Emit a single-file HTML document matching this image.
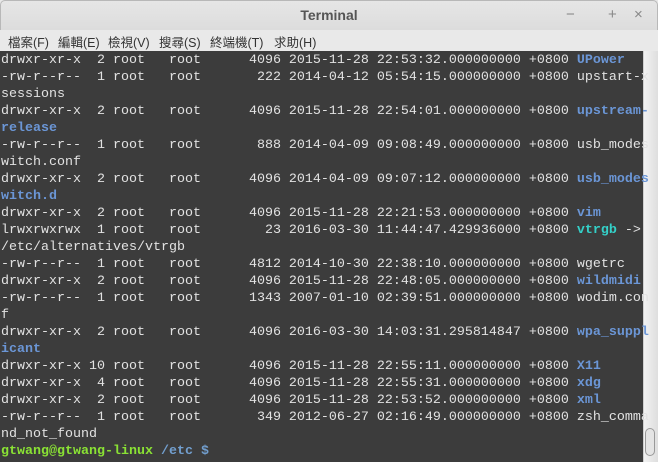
<!DOCTYPE html>
<html><head><meta charset="utf-8"><style>
*{margin:0;padding:0;box-sizing:border-box}
body{width:658px;height:462px;overflow:hidden;background:#e8e8e8;font-family:"Liberation Sans","Noto Sans CJK TC",sans-serif;position:relative}
#title{position:absolute;left:0;top:0;width:658px;height:30px;background:linear-gradient(#e6e6e6,#dcdcdc);border:1px solid #b8b8b8;border-bottom:none;border-radius:5px 5px 0 0}
#title .t{position:absolute;left:0;right:0;top:6px;text-align:center;font-size:14px;font-weight:bold;color:#555}
#title .b{position:absolute;top:5px;font-size:15px;color:#888}
#menu{position:absolute;left:0;top:30px;width:658px;height:21px;background:#e9e9e9;font-size:12.5px;color:#333}
#menu span{position:absolute;top:2px}
#term{position:absolute;left:0;top:51px;width:643px;height:411px;background:#3c3c3c}
#sb{position:absolute;left:643px;top:51px;width:15px;height:411px;background:linear-gradient(90deg,#f2f2f2,#dedede);border-left:1px solid #cfcfcf}
#thumb{position:absolute;left:645px;top:428px;width:10px;height:28px;border:1px solid #999;border-radius:5px;background:#e4e4e4}
pre{position:absolute;left:1px;top:52px;font-family:"Liberation Mono",monospace;font-size:13.33px;line-height:17px;color:#e2e2e2;white-space:pre}
.d{color:#6b96d6;font-weight:bold}
.c{color:#34d0c8;font-weight:bold}
.g{color:#8ae234;font-weight:bold}
.p{color:#729fcf;font-weight:bold}
</style></head><body>
<div id="title"><div class="t">Terminal</div><span class="b" style="left:565px">−</span><span class="b" style="left:607px">+</span><span class="b" style="left:633px">×</span></div>
<div id="menu"><span style="left:8px">檔案(F)</span><span style="left:58px">編輯(E)</span><span style="left:108px">檢視(V)</span><span style="left:159px">搜尋(S)</span><span style="left:210px">終端機(T)</span><span style="left:274px">求助(H)</span></div>
<div id="term"></div>
<div id="sb"></div><div id="thumb"></div>
<pre>drwxr-xr-x  2 root   root      4096 2015-11-28 22:53:32.000000000 +0800 <span class="d">UPower</span>
-rw-r--r--  1 root   root       222 2014-04-12 05:54:15.000000000 +0800 upstart-x
sessions
drwxr-xr-x  2 root   root      4096 2015-11-28 22:54:01.000000000 +0800 <span class="d">upstream-</span>
<span class="d">release</span>
-rw-r--r--  1 root   root       888 2014-04-09 09:08:49.000000000 +0800 usb_modes
witch.conf
drwxr-xr-x  2 root   root      4096 2014-04-09 09:07:12.000000000 +0800 <span class="d">usb_modes</span>
<span class="d">witch.d</span>
drwxr-xr-x  2 root   root      4096 2015-11-28 22:21:53.000000000 +0800 <span class="d">vim</span>
lrwxrwxrwx  1 root   root        23 2016-03-30 11:44:47.429936000 +0800 <span class="c">vtrgb</span> -&gt;
/etc/alternatives/vtrgb
-rw-r--r--  1 root   root      4812 2014-10-30 22:38:10.000000000 +0800 wgetrc
drwxr-xr-x  2 root   root      4096 2015-11-28 22:48:05.000000000 +0800 <span class="d">wildmidi</span>
-rw-r--r--  1 root   root      1343 2007-01-10 02:39:51.000000000 +0800 wodim.con
f
drwxr-xr-x  2 root   root      4096 2016-03-30 14:03:31.295814847 +0800 <span class="d">wpa_suppl</span>
<span class="d">icant</span>
drwxr-xr-x 10 root   root      4096 2015-11-28 22:55:11.000000000 +0800 <span class="d">X11</span>
drwxr-xr-x  4 root   root      4096 2015-11-28 22:55:31.000000000 +0800 <span class="d">xdg</span>
drwxr-xr-x  2 root   root      4096 2015-11-28 22:53:52.000000000 +0800 <span class="d">xml</span>
-rw-r--r--  1 root   root       349 2012-06-27 02:16:49.000000000 +0800 zsh_comma
nd_not_found
<span class="g">gtwang@gtwang-linux</span> <span class="p">/etc $</span></pre>
</body></html>
